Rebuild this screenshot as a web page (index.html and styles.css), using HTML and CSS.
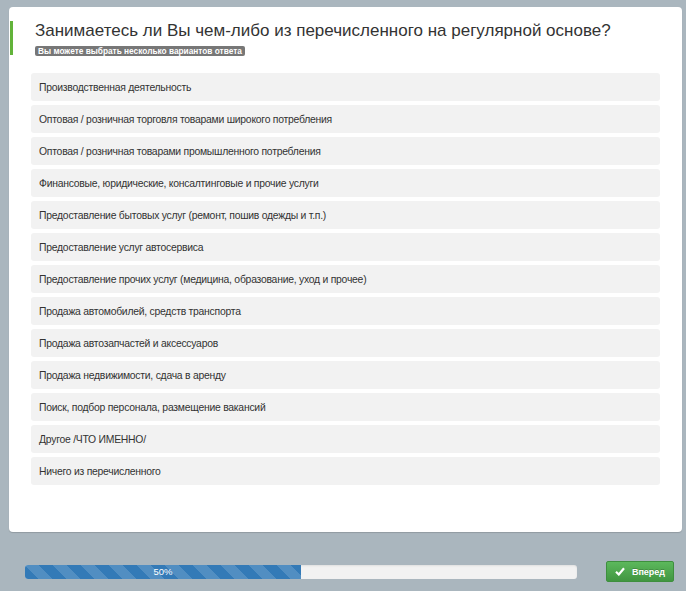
FILE: index.html
```html
<!DOCTYPE html>
<html lang="ru">
<head>
  <meta charset="UTF-8" />
  <meta name="viewport" content="width=device-width, initial-scale=1.0"/>
  <title>Опрос</title>
  <link rel="stylesheet" href="styles.css">
</head>
<body>

  <div class="survey">
    <!-- Question -->
    <div class="question">
      <h1>Занимаетесь ли Вы чем-либо из перечисленного на регулярной основе?</h1>
      <span class="hint">Вы можете выбрать несколько вариантов ответа</span>
    </div>

    <!-- Answers -->
    <ul class="answers">
      <li>Производственная деятельность</li>
      <li>Оптовая / розничная торговля товарами широкого потребления</li>
      <li>Оптовая / розничная товарами промышленного потребления</li>
      <li>Финансовые, юридические, консалтинговые и прочие услуги</li>
      <li>Предоставление бытовых услуг (ремонт, пошив одежды и т.п.)</li>
      <li>Предоставление услуг автосервиса</li>
      <li>Предоставление прочих услуг (медицина, образование, уход и прочее)</li>
      <li>Продажа автомобилей, средств транспорта</li>
      <li>Продажа автозапчастей и аксессуаров</li>
      <li>Продажа недвижимости, сдача в аренду</li>
      <li>Поиск, подбор персонала, размещение вакансий</li>
      <li>Другое /ЧТО ИМЕННО/</li>
      <li>Ничего из перечисленного</li>
    </ul>
  </div>

  <div class="footer">
    <div class="progress">
      <div class="progress-bar" style="width: 50%;">50%</div>
    </div>
    <button class="btn-next">
      <svg width="10" height="9" viewBox="0 0 10 9"><path d="M1 4.8 L3.8 7.5 L9 1.3" fill="none" stroke="#fff" stroke-width="2.2"/></svg>
      Вперед
    </button>
  </div>

</body>
</html>
```

FILE: styles.css
```css
body {
  font-family: "Liberation Sans", Arial, sans-serif;
  margin: 0;
  padding: 0;
  background: #aab6be;
  color: #333;
}

.survey {
  background: #fff;
  margin: 7px 4px 0 9px;
  height: 525px;
  box-sizing: border-box;
  padding: 14px 22px 0 22px;
  border-radius: 4px;
  box-shadow: 0 1px 1px rgba(0, 0, 0, 0.15);
}

.question {
  border-left: 3px solid #62b33a;
  margin-left: -21px;
  padding: 0 0 0 22px;
  height: 34px;
}

.question h1 {
  font-size: 17px;
  font-weight: normal;
  margin: 0;
  line-height: 20px;
  color: #333;
}

.hint {
  display: inline-block;
  margin-top: 5px;
  background: #777;
  color: #fff;
  font-size: 8.3px;
  font-weight: bold;
  line-height: 10px;
  padding: 0 3px;
  border-radius: 2px;
  vertical-align: top;
}

.answers {
  list-style: none;
  padding: 0;
  margin: 18px 0 0 0;
}

.answers li {
  background: #f2f2f2;
  border-radius: 3px;
  height: 28px;
  line-height: 30px;
  padding: 0 8px;
  margin-bottom: 4px;
  font-size: 10.4px;
  letter-spacing: -0.25px;
  color: #333;
  overflow: hidden;
}

.footer {
  display: flex;
  align-items: center;
  padding: 29px 12px 0 25px;
}

.progress {
  width: 552px;
  height: 14px;
  background: #f2f2f2;
  border-radius: 3px;
  overflow: hidden;
  box-shadow: inset 0 1px 2px rgba(0, 0, 0, 0.08);
}

.progress-bar {
  height: 100%;
  background-color: #337ab7;
  background-image: linear-gradient(45deg, rgba(255, 255, 255, 0.15) 25%, transparent 25%, transparent 50%, rgba(255, 255, 255, 0.15) 50%, rgba(255, 255, 255, 0.15) 75%, transparent 75%, transparent);
  background-size: 28px 28px;
  color: #fff;
  font-size: 9.5px;
  line-height: 14px;
  text-align: center;
}

.btn-next {
  margin-left: auto;
  width: 68px;
  height: 21px;
  display: flex;
  align-items: center;
  justify-content: center;
  gap: 7px;
  background: linear-gradient(#5cb85c, #419641);
  border: 1px solid #3e8f3e;
  border-radius: 2px;
  color: #fff;
  font-family: "Liberation Sans", Arial, sans-serif;
  font-size: 9px;
  font-weight: bold;
  text-shadow: 0 -1px 0 rgba(0, 0, 0, 0.2);
  padding: 0;
  cursor: pointer;
}
```
